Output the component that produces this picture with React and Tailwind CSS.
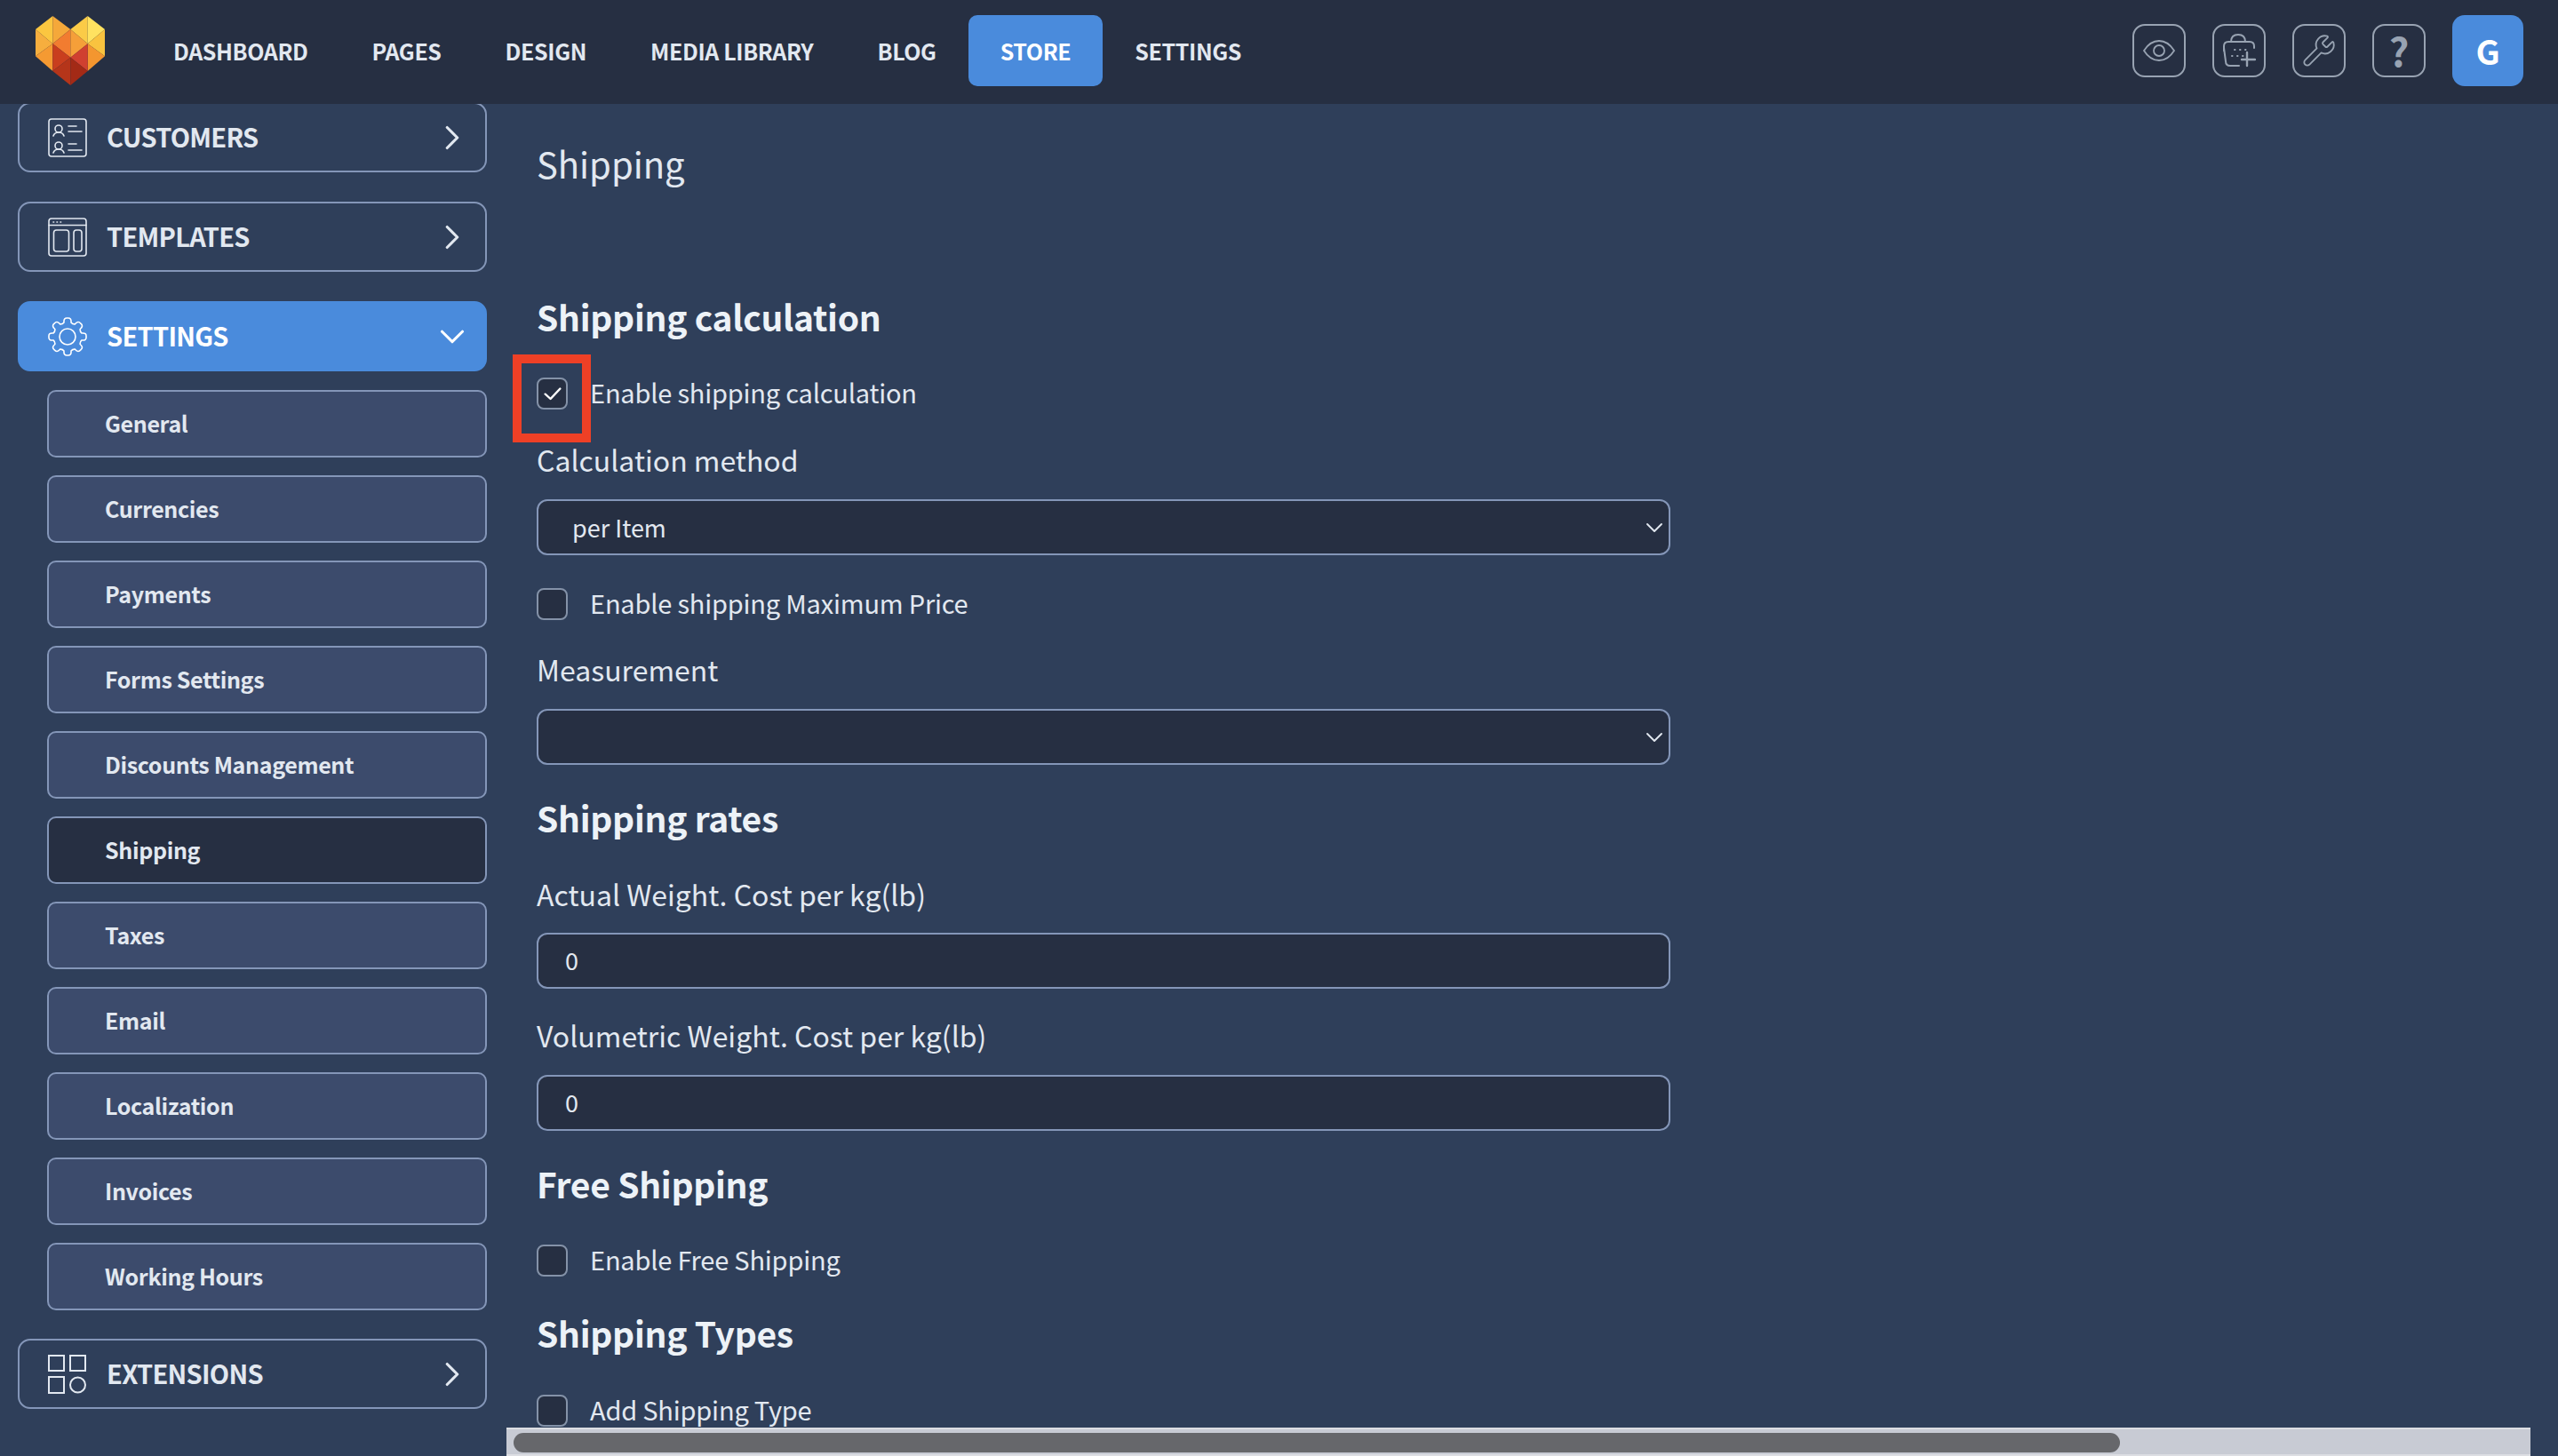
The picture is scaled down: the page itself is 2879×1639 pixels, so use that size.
import React from "react";
import { ChevronRight, ChevronDown, Wrench } from "lucide-react";

const FONT = "[font-family:'Noto_Sans_CJK_SC','Noto_Sans',sans-serif]";

const facets = [
  ["60,100 118,55 118,148", "#FBC640"],
  ["118,55 178,100 118,148", "#F5A83A"],
  ["178,100 236,55 236,148", "#FBCB47"],
  ["236,55 294,100 236,148", "#FFE260"],
  ["60,100 118,148 60,190", "#F6AE3E"],
  ["60,190 118,148 118,240", "#F59A32"],
  ["118,148 178,100 178,195", "#F27C30"],
  ["178,100 236,148 178,195", "#F59F39"],
  ["236,148 294,100 294,190", "#F9C33F"],
  ["236,148 294,190 236,240", "#F4962F"],
  ["118,148 178,195 118,240", "#C93E1E"],
  ["178,195 236,148 236,240", "#D04030"],
  ["118,240 178,195 178,288", "#B5351A"],
  ["178,195 236,240 178,288", "#A32A16"],
];

function Logo() {
  return (
    <svg viewBox="60 55 234 233" className="w-[78px] h-[78px] shrink-0" preserveAspectRatio="none">
      {facets.map(([p, c]) => (
        <polygon key={p} points={p} fill={c} />
      ))}
    </svg>
  );
}

function CustomersIcon() {
  return (
    <svg viewBox="0 0 44 44" className="w-[44px] h-[44px] shrink-0" fill="none" stroke="currentColor" strokeWidth="1.6" strokeLinecap="round">
      <rect x="1" y="1" width="42" height="42" rx="3" />
      <circle cx="12" cy="12" r="4" />
      <path d="M6 20c1-3 3-4 6-4s5 1 6 4" />
      <path d="M23 9h9M23 15h15" />
      <circle cx="12" cy="31" r="4" />
      <path d="M6 39c1-3 3-4 6-4s5 1 6 4" />
      <path d="M23 29h9M23 36h15" />
    </svg>
  );
}

function TemplatesIcon() {
  return (
    <svg viewBox="0 0 44 44" className="w-[44px] h-[44px] shrink-0" fill="none" stroke="currentColor" strokeWidth="1.6" strokeLinecap="round">
      <rect x="1" y="1" width="42" height="42" rx="3" />
      <path d="M1 8.5h42" />
      <path d="M6 5h.6M10 5h.6M14 5h.6" />
      <rect x="6.5" y="14" width="17" height="24" rx="3" />
      <rect x="29" y="14" width="9" height="24" rx="3" />
    </svg>
  );
}

function GearIcon() {
  const teeth = [0, 45, 90, 135, 180, 225, 270, 315];
  const d = [];
  const R = 21, r = 16.5;
  const pt = (rad, deg) => {
    const a = ((deg - 90) * Math.PI) / 180;
    return `${(22 + rad * Math.cos(a)).toFixed(2)} ${(22 + rad * Math.sin(a)).toFixed(2)}`;
  };
  teeth.forEach((t, i) => {
    d.push(`${i === 0 ? "M" : "L"}${pt(r, t - 14)}`);
    d.push(`Q${pt(R + 1, t - 12)} ${pt(R, t)}`);
    d.push(`Q${pt(R + 1, t + 12)} ${pt(r, t + 14)}`);
    d.push(`Q${pt(r - 1.5, t + 22.5)} ${pt(r, t + 31)}`);
  });
  return (
    <svg viewBox="0 0 44 44" className="w-[44px] h-[44px] shrink-0" fill="none" stroke="currentColor" strokeWidth="1.6" strokeLinejoin="round">
      <path d={d.join(" ") + " Z"} />
      <circle cx="22" cy="22" r="9" />
    </svg>
  );
}

function ExtensionsIcon() {
  return (
    <svg viewBox="0 0 44 44" className="w-[44px] h-[44px] shrink-0" fill="none" stroke="currentColor" strokeWidth="2">
      <rect x="1" y="1" width="17" height="17" />
      <rect x="25" y="1" width="17" height="17" />
      <rect x="1" y="25" width="17" height="18" />
      <circle cx="33.5" cy="34" r="8.5" />
    </svg>
  );
}

function MainItem({ icon, label, active, mt }) {
  return (
    <div
      className={`w-[528px] h-[79px] ml-[20px] shrink-0 flex items-center pl-[32px] pr-[14px] rounded-[14px] border-2 ${mt} ${
        active ? "bg-[#4a8bdc] border-[#4a8bdc] text-white" : "border-[#8496b8] text-[#e2e8f0]"
      }`}
    >
      {icon}
      <span className="ml-[22px] flex-1 text-[29px] tracking-[-0.7px] leading-none font-semibold pb-[2px]">{label}</span>
      {active ? (
        <ChevronDown size={46} strokeWidth={1.6} />
      ) : (
        <ChevronRight size={46} strokeWidth={1.6} />
      )}
    </div>
  );
}

function SubItem({ label, active, first }) {
  return (
    <div
      className={`w-[495px] h-[76px] ml-[53px] shrink-0 flex items-center pl-[63px] pb-[2px] rounded-[10px] border-2 border-[#8496b8] text-[#e2e8f0] text-[25px] tracking-[-0.35px] font-semibold leading-none ${
        first ? "mt-[21px]" : "mt-[20px]"
      } ${active ? "bg-[#262f42]" : "bg-[#3c4b6c]"}`}
    >
      {label}
    </div>
  );
}

function NavItem({ label, active }) {
  return (
    <div
      className={`h-[80px] px-[36px] flex items-center rounded-[10px] text-[25px] tracking-[-0.38px] font-semibold leading-none ${
        active ? "bg-[#4a8bdc] text-white" : "text-[#e2e8f0]"
      }`}
    >
      {label}
    </div>
  );
}

function IconBtn({ children }) {
  return (
    <div className="w-[60px] h-[60px] flex items-center justify-center rounded-[14px] border-2 border-[#98a3b2] text-[#98a3b2]">
      {children}
    </div>
  );
}

function CheckRow({ label, checked, mt }) {
  return (
    <div className={`h-[36px] flex items-center ${mt}`}>
      <div className="w-[35px] h-[36px] shrink-0 rounded-[8px] border-2 border-[#8492a8] bg-[#262f42] flex items-center justify-center">
        {checked && (
          <svg viewBox="0 0 20 20" preserveAspectRatio="none" className="w-[24px] h-[22px]" fill="none" stroke="#fff" strokeWidth="2" strokeLinecap="round" strokeLinejoin="round">
            <path d="M3 10.5l5 5L17 5" />
          </svg>
        )}
      </div>
      <span className="ml-[25px] pb-[3px] text-[29px] tracking-[-0.2px] leading-none text-[#e2e8f0] whitespace-nowrap">{label}</span>
    </div>
  );
}

function H2({ children, mt }) {
  return <div className={`h-[50px] pb-[4px] flex items-center text-[39px] tracking-[-0.3px] font-semibold leading-none text-[#edf2f7] ${mt}`}>{children}</div>;
}

function Label({ children, mt }) {
  return <div className={`h-[40px] pb-[4px] flex items-center text-[32px] leading-none text-[#e2e8f0] ${mt}`}>{children}</div>;
}

function Field({ value, select, mt, h }) {
  return (
    <div
      className={`w-[1276px] ${h} flex items-center justify-between rounded-[12px] border-2 border-[#8496b8] bg-[#262f42] text-[27px] leading-none text-[#e2e8f0] ${
        select ? "pl-[38px]" : "pl-[30px] pb-[2px]"
      } ${mt}`}
    >
      <span>{value}</span>
      {select && <ChevronDown size={32} strokeWidth={1.4} />}
    </div>
  );
}

export default function App() {
  return (
    <div className={`w-[2879px] h-[1639px] flex flex-col overflow-hidden bg-[#2f3f5a] ${FONT}`}>
      <header className="h-[117px] pb-[3px] shrink-0 relative z-10 flex items-center bg-[#262f42]">
        <div className="ml-[40px] mr-[41px] flex items-center">
          <Logo />
        </div>
        <nav className="flex items-center">
          <NavItem label="DASHBOARD" />
          <NavItem label="PAGES" />
          <NavItem label="DESIGN" />
          <NavItem label="MEDIA LIBRARY" />
          <NavItem label="BLOG" />
          <NavItem label="STORE" active />
          <NavItem label="SETTINGS" />
        </nav>
        <div className="ml-auto mr-[39px] flex items-center gap-[30px]">
          <IconBtn>
            <svg viewBox="0 0 36 24" className="w-[36px] h-[24px]" fill="none" stroke="currentColor" strokeWidth="1.8">
              <path d="M1 12C6 4 12 1 18 1s12 3 17 11c-5 8-11 11-17 11S6 20 1 12z" />
              <circle cx="18" cy="12" r="6" />
            </svg>
          </IconBtn>
          <IconBtn>
            <svg viewBox="0 0 38 38" className="w-[38px] h-[38px]" fill="none" stroke="currentColor" strokeWidth="2" strokeLinecap="round">
              <path d="M10 9c0-5 3-8 8-8s8 3 8 8" />
              <path d="M2 19v-5c0-3 2-5 5-5h24c3 0 5 2 5 5v2" />
              <path d="M2 16l2 15c0 3 2 5 5 5h10" />
              <path d="M14 18h.5M20 18h.5M26 18h.5M11 25h.5M17 25h.5M23 25h.5" />
              <path d="M28 21v15M22 29h15" strokeWidth="2.4" />
            </svg>
          </IconBtn>
          <IconBtn>
            <Wrench size={40} strokeWidth={1.1} />
          </IconBtn>
          <IconBtn>
            <span className="text-[44px] font-bold leading-none pb-[3px]">?</span>
          </IconBtn>
          <div className="w-[80px] h-[80px] rounded-[14px] bg-[#4a8bdc] text-white text-[38px] font-bold flex items-center justify-center pb-[2px]">
            G
          </div>
        </div>
      </header>

      <div className="flex-1 min-h-0 flex">
        <aside className="w-[570px] shrink-0 flex flex-col overflow-hidden">
          <div className="-mt-[2px] flex flex-col">
            <MainItem icon={<CustomersIcon />} label="CUSTOMERS" />
            <MainItem icon={<TemplatesIcon />} label="TEMPLATES" mt="mt-[33px]" />
            <MainItem icon={<GearIcon />} label="SETTINGS" active mt="mt-[33px]" />
            <SubItem label="General" first />
            <SubItem label="Currencies" />
            <SubItem label="Payments" />
            <SubItem label="Forms Settings" />
            <SubItem label="Discounts Management" />
            <SubItem label="Shipping" active />
            <SubItem label="Taxes" />
            <SubItem label="Email" />
            <SubItem label="Localization" />
            <SubItem label="Invoices" />
            <SubItem label="Working Hours" />
            <MainItem icon={<ExtensionsIcon />} label="EXTENSIONS" mt="mt-[32px]" />
          </div>
        </aside>

        <main className="flex-1 min-w-0 flex flex-col pr-[31px]">
          <div className="relative flex-1 min-h-0 overflow-hidden pl-[34px] pt-[38px]">
            <div className="h-[60px] pb-[3px] flex items-center text-[40px] leading-none text-[#e2e8f0]">Shipping</div>
            <H2 mt="mt-[118px]">Shipping calculation</H2>
            <CheckRow label="Enable shipping calculation" checked mt="mt-[42px]" />
            <Label mt="mt-[38px]">Calculation method</Label>
            <Field value="per Item" select h="h-[63px]" mt="mt-[23px]" />
            <CheckRow label="Enable shipping Maximum Price" mt="mt-[37px]" />
            <Label mt="mt-[37px]">Measurement</Label>
            <Field value="" select h="h-[63px]" mt="mt-[23px]" />
            <H2 mt="mt-[36px]">Shipping rates</H2>
            <Label mt="mt-[41px]">Actual Weight. Cost per kg(lb)</Label>
            <Field value="0" h="h-[63px]" mt="mt-[22px]" />
            <Label mt="mt-[34px]">Volumetric Weight. Cost per kg(lb)</Label>
            <Field value="0" h="h-[63px]" mt="mt-[23px]" />
            <H2 mt="mt-[36px]">Free Shipping</H2>
            <CheckRow label="Enable Free Shipping" mt="mt-[42px]" />
            <H2 mt="mt-[40px]">Shipping Types</H2>
            <CheckRow label="Add Shipping Type" mt="mt-[43px]" />
            <div className="absolute left-[7px] top-[282px] w-[88px] h-[99px] border-[10px] border-[#ee4026]" />
          </div>
          <div className="h-[32px] shrink-0 border-y-2 border-[#dcdee3] bg-[#c8cbd4] pl-[8px] pt-[4px]">
            <div className="w-[1808px] h-[22px] rounded-full bg-[#66676b]" />
          </div>
        </main>
      </div>
    </div>
  );
}
